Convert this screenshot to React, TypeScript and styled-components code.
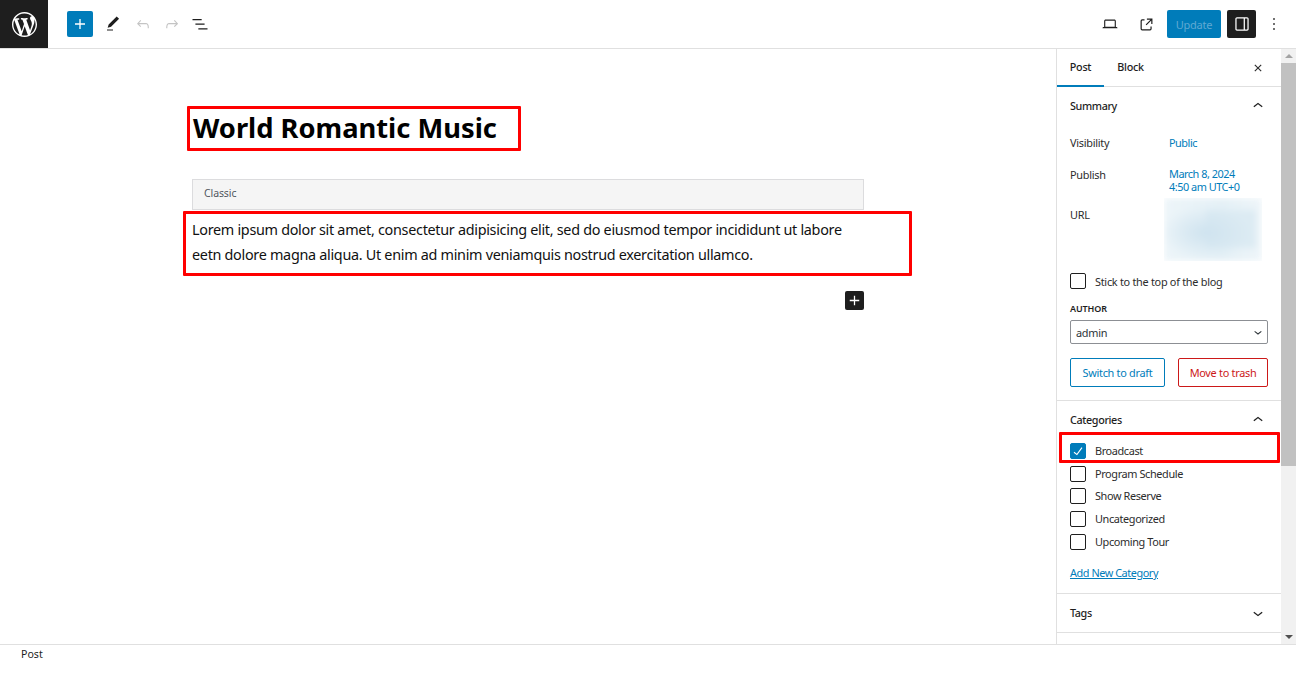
import React from "react";
import styled, { createGlobalStyle } from "styled-components";

const Global = createGlobalStyle`
  html, body { margin: 0; padding: 0; background: #fff; }
  * { box-sizing: border-box; }
  #root { height: 690px; overflow: hidden; }
  svg { flex: none; }
`;
const FONT = `"Noto Sans", "Open Sans", sans-serif`;

const Page = styled.div`
  position: relative; width: 1296px; height: 690px; display: flex; flex-direction: column;
  font-family: ${FONT}; color: #1e1e1e; overflow: hidden;
`;
const Header = styled.header`
  height: 49px; flex: none; display: flex; align-items: center; border-bottom: 1px solid #e0e0e0;
`;
const LogoBlock = styled.div`
  width: 48px; height: 48px; background: #1e1e1e; display: flex; align-items: center; justify-content: center;
  color: #fff; margin-right: 19px;
`;
const Left = styled.div` display: flex; align-items: center; `;
const Spacer = styled.div` flex: 1; `;
const InserterButton = styled.div`
  width: 26px; height: 26px; background: #007cba; border-radius: 2px; color: #fff;
  display: flex; align-items: center; justify-content: center; margin-right: 8px;
`;
const ToolIcon = styled.div<{ $m?: number; $muted?: boolean }>`
  width: 24px; height: 24px; display: flex; align-items: center; justify-content: center;
  color: ${p => (p.$muted ? "#c4c4c4" : "#1e1e1e")};
  margin-right: ${p => p.$m ?? 0}px;
`;
const UpdateButton = styled.div`
  width: 54px; height: 28px; background: #007cba; color: #5fa9d2; border-radius: 2px; font-size: 11px;
  letter-spacing: -0.25px; display: flex; align-items: center; justify-content: center; margin-right: 6px;
`;
const DrawerButton = styled.div`
  width: 29px; height: 28px; background: #1e1e1e; color: #fff; border-radius: 2px;
  display: flex; align-items: center; justify-content: center; margin-right: 6px;
`;
const Body = styled.div` flex: none; height: 595px; display: flex; `;
const Canvas = styled.main` width: 1056px; flex: none; padding-top: 60px; `;
const Content = styled.div` width: 672px; margin: 0 auto; display: flex; flex-direction: column; `;
const Title = styled.h1`
  margin: 0; font-size: 27.3px; line-height: 38px; font-weight: 700; color: #000; padding-left: 1px; height: 70px;
`;
const ClassicBar = styled.div`
  height: 31px; background: #f5f5f5; border: 1px solid #dcdcde; display: flex; align-items: center;
  padding: 0 0 3px 11px; font-size: 10.5px; letter-spacing: -0.1px; color: #50575e;
`;
const Para = styled.p`
  margin: 7px 0 0; font-size: 14.4px; line-height: 25px; letter-spacing: -0.3px; color: #111; height: 74px;
  white-space: pre-line;
`;
const BlockAdd = styled.div`
  width: 19px; height: 19px; background: #1e1e1e; color: #fff; border-radius: 2px; align-self: flex-end;
  display: flex; align-items: center; justify-content: center;
`;
const Sidebar = styled.aside`
  width: 240px; flex: none; display: flex; border-left: 1px solid #e0e0e0; overflow: hidden;
`;
const SidePane = styled.div` width: 224px; flex: none; font-size: 10.9px; letter-spacing: -0.28px; color: #2c2c2c; `;
const Tabs = styled.div`
  height: 38px; display: flex; align-items: stretch; border-bottom: 1px solid #e0e0e0; position: relative;
`;
const Tab = styled.div<{ $on?: boolean; $w: number }>`
  width: ${p => p.$w}px; display: flex; align-items: center; justify-content: center; font-size: 10.8px;
  font-weight: 500; letter-spacing: -0.3px; color: #1e1e1e; margin-bottom: -1px; padding-bottom: 2px;
  border-bottom: 2px solid ${p => (p.$on ? "#007cba" : "transparent")};
`;
const TabClose = styled.div` margin-left: auto; margin-right: 14px; display: flex; align-items: center; `;
const Panel = styled.section<{ $h: number }>`
  height: ${p => p.$h}px; border-bottom: 1px solid #e0e0e0; padding: 0 13px; flex: none;
`;
const PanelHead = styled.div<{ $h: number; $mb?: number }>`
  height: ${p => p.$h}px; margin-bottom: ${p => p.$mb ?? 0}px; display: flex; align-items: center; justify-content: space-between;
  font-size: 10.8px; font-weight: 500; letter-spacing: -0.38px; color: #1e1e1e;
`;
const HeadIcon = styled.span` display: flex; `;
const Row = styled.div<{ $h: number }>` height: ${p => p.$h}px; display: flex; `;
const RowLabel = styled.div` width: 99px; flex: none; line-height: 16px; `;
const RowValue = styled.div<{ $lh?: number }>` color: #007cba; line-height: ${p => p.$lh ?? 13}px; letter-spacing: -0.48px; `;
const BlurBox = styled.div`
  width: 98px; height: 63px; margin: -9px 0 0 -5px; overflow: hidden; position: relative;
`;
const BlurFill = styled.div`
  width: 100%; height: 100%;
  background:
    radial-gradient(ellipse 46% 42% at 42% 55%, #cfe3ef 0%, rgba(207, 227, 239, 0) 100%),
    linear-gradient(#dcebf3, #dcebf3) 42px 12px / 50px 38px no-repeat,
    linear-gradient(90deg, #edf5f9 0%, #e4f0f6 60%, #eef5f9 100%);
  filter: blur(3px);
`;
const CheckRow = styled.div<{ $mb?: number }>`
  height: 16px; margin-bottom: ${p => p.$mb ?? 0}px; display: flex; align-items: center; gap: 9px;
`;
const CatLabel = styled.span` padding-bottom: 1px; letter-spacing: -0.38px; `;
const Box = styled.span<{ $on?: boolean }>`
  width: 16px; height: 16px; flex: none; border-radius: 2px; display: flex; align-items: center; justify-content: center; color: #fff;
  border: 1px solid ${p => (p.$on ? "#007cba" : "#1e1e1e")}; background: ${p => (p.$on ? "#007cba" : "#fff")};
`;
const AuthorLabel = styled.div`
  font-size: 9px; font-weight: 600; text-transform: uppercase; line-height: 12px; margin-top: 14px; letter-spacing: -0.1px; color: #1e1e1e;
`;
const Select = styled.div`
  height: 24px; margin-top: 5px; border: 1px solid #8c8f94; border-radius: 2px; display: flex; align-items: center;
  justify-content: space-between; padding: 0 1px 0 5px; width: 198px; color: #2c3338;
`;
const ButtonRow = styled.div` display: flex; justify-content: space-between; margin-top: 14px; width: 198px; `;
const OutlineButton = styled.div<{ $c: string; $w: number }>`
  width: ${p => p.$w}px; height: 29px; border: 1px solid ${p => p.$c}; color: ${p => p.$c}; border-radius: 2px;
  display: flex; align-items: center; justify-content: center;
`;
const AddLink = styled.a` display: block; color: #007cba; text-decoration: underline; margin-top: 16px; line-height: 14px; letter-spacing: -0.45px; `;
const Scrollbar = styled.div`
  width: 15px; flex: none; background: #f1f1f1; display: flex; flex-direction: column; align-items: center;
`;
const Arrow = styled.div<{ $down?: boolean }>`
  height: 14px; flex: none; display: flex; align-items: center; justify-content: center; width: 100%;
  &::before {
    content: ""; border-left: 4px solid transparent; border-right: 4px solid transparent;
    ${p => (p.$down ? "border-top: 4px solid #505050;" : "border-bottom: 4px solid #a3a3a3;")}
  }
`;
const Thumb = styled.div` width: 100%; height: 403px; background: #c1c1c1; `;
const TrackGap = styled.div` flex: 1; `;
const StatusBar = styled.footer`
  height: 21px; flex: none; border-top: 1px solid #e0e0e0; padding-left: 21px; font-size: 10.6px; line-height: 18px; color: #1e1e1e;
`;
const Annotation = styled.div<{ $x: number; $y: number; $w: number; $h: number }>`
  position: absolute; left: ${p => p.$x}px; top: ${p => p.$y}px; width: ${p => p.$w}px; height: ${p => p.$h}px;
  border: 3px solid #f00; border-radius: 1px;
`;

const I = ({ d, s = 24, vb = "0 0 24 24" }: { d: string; s?: number; vb?: string }) => (
  <svg width={s} height={s} viewBox={vb} fill="currentColor" aria-hidden="true"><path d={d} /></svg>
);
const P = {
  wp: "M20 10c0-5.51-4.49-10-10-10C4.48 0 0 4.49 0 10c0 5.52 4.48 10 10 10 5.51 0 10-4.48 10-10zM7.78 15.37L4.37 6.22c.55-.02 1.17-.08 1.17-.08.5-.06.44-1.13-.06-1.11 0 0-1.45.11-2.37.11-.18 0-.37 0-.58-.01C4.12 2.69 6.87 1.11 10 1.11c2.33 0 4.45.87 6.05 2.34-.68-.11-1.65.39-1.65 1.58 0 .74.45 1.36.9 2.1.35.61.55 1.36.55 2.46 0 1.49-1.4 5-1.4 5l-3.03-8.37c.54-.02.82-.17.82-.17.5-.05.44-1.25-.06-1.22 0 0-1.44.12-2.38.12-.87 0-2.33-.12-2.33-.12-.5-.03-.56 1.2-.06 1.22l.92.08 1.26 3.41zM17.41 10c.24-.64.74-1.87.43-4.25.7 1.29 1.05 2.71 1.05 4.25 0 3.29-1.73 6.24-4.4 7.78.97-2.59 1.94-5.2 2.92-7.78zM6.1 18.09C3.12 16.65 1.11 13.53 1.11 10c0-1.3.23-2.48.72-3.59C3.25 10.3 4.67 14.2 6.1 18.09zm4.03-6.63l2.58 6.98c-.86.29-1.76.45-2.71.45-.79 0-1.57-.11-2.29-.33.81-2.38 1.62-4.74 2.42-7.1z",
  plus: "M18 11.2h-5.2V6h-1.6v5.2H6v1.6h5.2V18h1.6v-5.2H18z",
  pencil: "M20.1 5.1L16.9 2 6.2 12.7l-1.3 4.4 4.5-1.3L20.1 5.1zM4 20.8h8v-1.5H4v1.5z",
  undo: "M18.3 11.7c-.6-.6-1.4-.9-2.3-.9H6.7l2.9-3.3-1.1-1-4.5 5L8.5 16l1-1-2.7-2.7H16c.5 0 .9.2 1.3.5 1 1 1 3.4 1 4.5v.3h1.5v-.2c0-1.5 0-4.3-1.5-5.7z",
  redo: "M15.6 6.5l-1.1 1 2.9 3.3H8c-.9 0-1.7.3-2.3.9-1.4 1.5-1.4 4.2-1.4 5.6v.2h1.5v-.3c0-1.1 0-3.5 1-4.5.3-.3.7-.5 1.3-.5h9.2L14.5 15l1.1 1.1 4.6-4.6-4.6-5z",
  list: "M3 6h11v1.5H3V6zm3.5 5.5h11V13h-11v-1.5zM21 17H10v1.5h11V17z",
  laptop: "M20.5 16h-.7V8c0-1.1-.9-2-2-2H6.2c-1.1 0-2 .9-2 2v8h-.7c-.8 0-1.5.7-1.5 1.5h20c0-.8-.7-1.5-1.5-1.5zM5.7 8c0-.3.2-.5.5-.5h11.6c.3 0 .5.2.5.5v7.6H5.7V8z",
  ext: "M19.5 4.5h-7V6h4.44l-5.97 5.97 1.06 1.06L18 7.06v4.44h1.5v-7Zm-13 1a2 2 0 0 0-2 2v10a2 2 0 0 0 2 2h10a2 2 0 0 0 2-2v-3H17v3a.5.5 0 0 1-.5.5h-10a.5.5 0 0 1-.5-.5v-10a.5.5 0 0 1 .5-.5h3V5.5h-3Z",
  drawer: "M18 4H6c-1.1 0-2 .9-2 2v12c0 1.1.9 2 2 2h12c1.1 0 2-.9 2-2V6c0-1.1-.9-2-2-2zm-4 14.5H6c-.3 0-.5-.2-.5-.5V6c0-.3.2-.5.5-.5h8v13zm4.5-.5c0 .3-.2.5-.5.5h-2.5v-13H18c.3 0 .5.2.5.5v12z",
  more: "M13 19h-2v-2h2v2zm0-6h-2v-2h2v2zm0-6h-2V5h2v2z",
  close: "M12 13.06l3.712 3.713 1.061-1.06L13.061 12l3.712-3.712-1.06-1.06L12 10.938 8.288 7.227l-1.061 1.06L10.939 12l-3.712 3.712 1.06 1.061L12 13.061z",
  up: "M6.5 12.4L12 8l5.5 4.4-.9 1.2L12 10l-4.5 3.6-1-1.2z",
  down: "M17.5 11.6L12 16l-5.5-4.4.9-1.2L12 14l4.5-3.6 1 1.2z",
  check: "M16.7 7.1l-6.3 8.5-3.3-2.5-.9 1.2 4.5 3.4L17.9 8z",
};

const cats: [string, boolean, number][] = [
  ["Broadcast", true, 7],
  ["Program Schedule", false, 6],
  ["Show Reserve", false, 7],
  ["Uncategorized", false, 7],
  ["Upcoming Tour", false, 0],
];

export default function App() {
  return (
    <Page>
      <Global />
      <Header>
        <LogoBlock><I d={P.wp} s={25} vb="0 0 20 20" /></LogoBlock>
        <Left>
          <InserterButton><I d={P.plus} s={20} /></InserterButton>
          <ToolIcon $m={6}><I d={P.pencil} s={18} /></ToolIcon>
          <ToolIcon $m={5} $muted><I d={P.undo} s={18} /></ToolIcon>
          <ToolIcon $m={4} $muted><I d={P.redo} s={18} /></ToolIcon>
          <ToolIcon><I d={P.list} s={20} /></ToolIcon>
        </Left>
        <Spacer />
        <ToolIcon $m={12}><I d={P.laptop} s={18} /></ToolIcon>
        <ToolIcon $m={9}><I d={P.ext} s={19} /></ToolIcon>
        <UpdateButton>Update</UpdateButton>
        <DrawerButton><I d={P.drawer} s={20} /></DrawerButton>
        <ToolIcon $m={10}><I d={P.more} s={20} /></ToolIcon>
      </Header>
      <Body>
        <Canvas>
          <Content>
            <Title>World Romantic Music</Title>
            <ClassicBar>Classic</ClassicBar>
            <Para>{"Lorem ipsum dolor sit amet, consectetur adipisicing elit, sed do eiusmod tempor incididunt ut labore\neetn dolore magna aliqua. Ut enim ad minim veniamquis nostrud exercitation ullamco."}</Para>
            <BlockAdd><I d={P.plus} s={19} /></BlockAdd>
          </Content>
        </Canvas>
        <Sidebar>
          <SidePane>
            <Tabs>
              <Tab $on $w={47}>Post</Tab>
              <Tab $w={53}>Block</Tab>
              <TabClose><I d={P.close} s={18} /></TabClose>
            </Tabs>
            <Panel $h={314}>
              <PanelHead $h={37} $mb={11}>Summary<HeadIcon><I d={P.up} s={20} /></HeadIcon></PanelHead>
              <Row $h={32}>
                <RowLabel>Visibility</RowLabel><RowValue $lh={15}>Public</RowValue>
              </Row>
              <Row $h={40}>
                <RowLabel>Publish</RowLabel><RowValue>March 8, 2024<br />4:50 am UTC+0</RowValue>
              </Row>
              <Row $h={66}>
                <RowLabel>URL</RowLabel><BlurBox><BlurFill /></BlurBox>
              </Row>
              <CheckRow><Box /><span>Stick to the top of the blog</span></CheckRow>
              <AuthorLabel>Author</AuthorLabel>
              <Select>admin<I d={P.down} s={16} /></Select>
              <ButtonRow>
                <OutlineButton $c="#007cba" $w={95}>Switch to draft</OutlineButton>
                <OutlineButton $c="#cc1818" $w={90}>Move to trash</OutlineButton>
              </ButtonRow>
            </Panel>
            <Panel $h={193}>
              <PanelHead $h={37} $mb={5}>Categories<HeadIcon><I d={P.up} s={20} /></HeadIcon></PanelHead>
              {cats.map(([n, on, mb]) => (
                <CheckRow key={n} $mb={mb}><Box $on={on}>{on && <I d={P.check} s={18} />}</Box><CatLabel>{n}</CatLabel></CheckRow>
              ))}
              <AddLink>Add New Category</AddLink>
            </Panel>
            <Panel $h={39}>
              <PanelHead $h={37}>Tags<HeadIcon><I d={P.down} s={20} /></HeadIcon></PanelHead>
            </Panel>
          </SidePane>
          <Scrollbar>
            <Arrow />
            <Thumb />
            <TrackGap />
            <Arrow $down />
          </Scrollbar>
        </Sidebar>
      </Body>
      <StatusBar>Post</StatusBar>
      <Annotation $x={187} $y={106} $w={334} $h={45} />
      <Annotation $x={183} $y={211} $w={729} $h={65} />
      <Annotation $x={1059} $y={432} $w={221} $h={31} />
    </Page>
  );
}
